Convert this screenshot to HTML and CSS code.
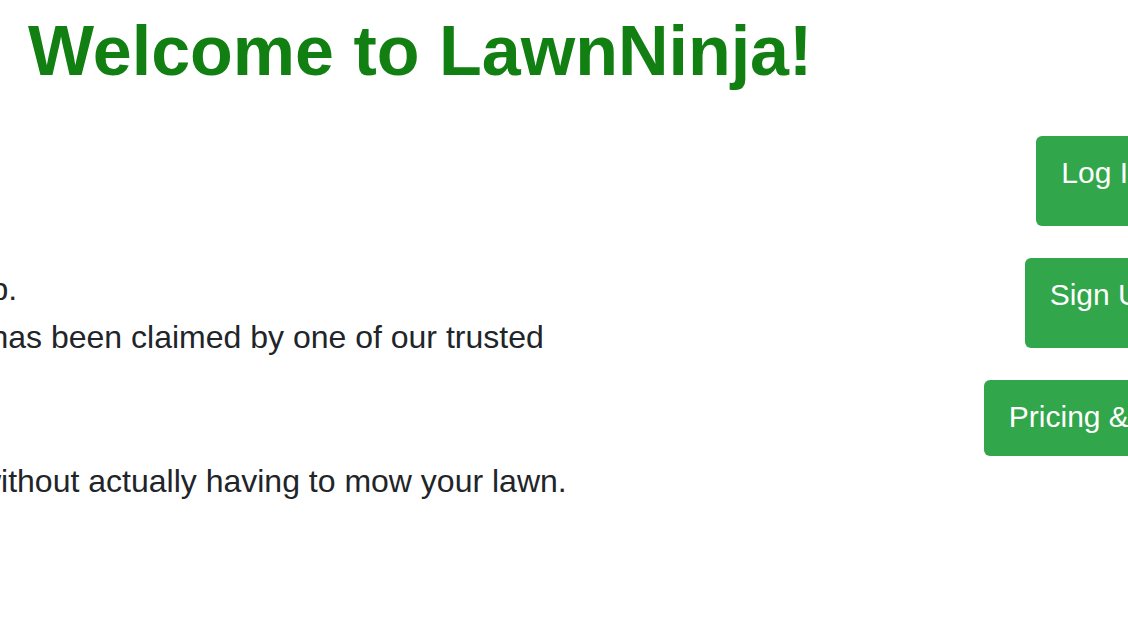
FILE: index.html
```html
<!DOCTYPE html>
<html lang="en">
<head>
<meta charset="utf-8">
<title>LawnNinja</title>
<link rel="stylesheet" href="styles.css">
</head>
<body>
<div class="page">
  <h1 class="title">Welcome to LawnNinja!</h1>
  <main class="main">
    <section class="steps">
      <p class="step">1. Post your lawn mowing job.</p>
      <p class="step">2. Get notified when the job has been claimed by one of our trusted<br>Lawn Ninjas.</p>
      <p class="step">3. Sit back and relax.</p>
      <p class="step">4. Enjoy a freshly cut yard, without actually having to mow your lawn.</p>
    </section>
    <nav class="actions">
      <a class="btn btn-tall" href="#">Log In</a>
      <a class="btn btn-tall" href="#">Sign Up</a>
      <a class="btn" href="#">Pricing &amp; FAQ</a>
    </nav>
  </main>
</div>
</body>
</html>
```

FILE: styles.css
```css
html, body {
  margin: 0;
  padding: 0;
  background: #ffffff;
}

body {
  font-family: "Liberation Sans", Arial, Helvetica, sans-serif;
  color: #212529;
}

.page {
  width: 1128px;
  height: 644px;
  overflow: hidden;
}

.title {
  margin: 11px 0 0 28px;
  font-size: 70px;
  font-weight: bold;
  line-height: normal;
  color: #117f11;
}

.main {
  display: grid;
  grid-template-columns: 1275px 472px;
  margin: 45px 0 0 -408px;
}

.steps {
  margin-top: 129px;
  font-size: 32px;
  line-height: 1.5;
  white-space: nowrap;
}

.step {
  margin: 0;
}

.actions {
  display: flex;
  flex-direction: column;
  align-items: center;
  gap: 32px;
}

.btn {
  display: block;
  padding: 14px 25px 17px;
  font-size: 30px;
  line-height: 1.5;
  color: #ffffff;
  background: #32a64a;
  border-radius: 6px;
  text-decoration: none;
  white-space: nowrap;
}

.btn-tall {
  padding-bottom: 31px;
}
```
